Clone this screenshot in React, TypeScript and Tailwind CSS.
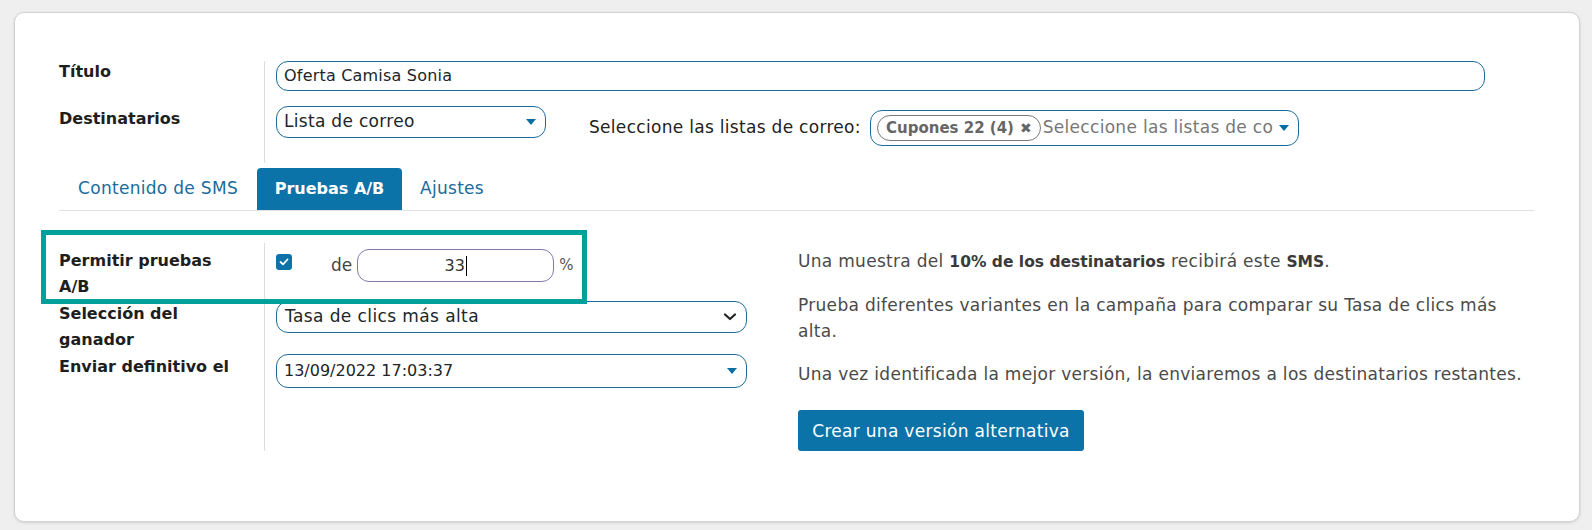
import React from "react";

const Caret = () => (
  <svg width="10" height="6" viewBox="0 0 10 6" className="shrink-0">
    <path d="M0 0 L10 0 L5 6 Z" fill="#0b6ea3" />
  </svg>
);

const Chevron = () => (
  <svg width="14" height="10" viewBox="0 0 14 10" className="shrink-0">
    <path d="M2 2.5 L7 7 L12 2.5" fill="none" stroke="#222" strokeWidth="2.2" strokeLinecap="round" strokeLinejoin="round" />
  </svg>
);

export default function App() {
  return (
    <div
      className="w-[1592px] h-[530px] bg-[#efefef] pt-[12px] pl-[14px] overflow-hidden text-[#212529]"
      style={{ fontFamily: '"DejaVu Sans", "Noto Sans", sans-serif' }}
    >
      <div className="w-[1566px] h-[510px] bg-white rounded-[10px] border border-[#d2d2d2] shadow-[0_1px_3px_rgba(0,0,0,0.12)] pl-[44px] pt-[48px] relative">
        {/* Top section */}
        <div className="flex">
          <div className="w-[205px] text-[16px] font-bold leading-[26px] text-[#1e1e1e]">
            <div className="mt-[-2px]">Título</div>
            <div className="mt-[21px]">Destinatarios</div>
          </div>
          <div className="border-l border-[#dcdcdc] pl-[11px] h-[102px]">
            <div className="w-[1209px] h-[30px] border border-[#1a6c9c] rounded-[12px] flex items-center px-[7px] text-[16px] tracking-[0.2px]">
              Oferta Camisa Sonia
            </div>
            <div className="flex items-start mt-[15px]">
              <div className="w-[270px] h-[32px] border border-[#1a6c9c] rounded-[12px] flex items-center justify-between pl-[7px] pr-[9px] text-[17px] tracking-[0.3px]">
                <span>Lista de correo</span>
                <Caret />
              </div>
              <div className="ml-[43px] w-[281px] mt-[8px] text-[17px] tracking-[0.3px] leading-[26px] text-[#222] whitespace-nowrap">
                Seleccione las listas de correo:
              </div>
              <div className="mt-[4px] w-[429px] h-[36px] border border-[#1a6c9c] rounded-[12px] flex items-center pl-[6px] pr-[9px] overflow-hidden">
                <div className="shrink-0 h-[26px] border border-[#7a7a7a] rounded-full flex items-center px-[8px] gap-[6px] text-[#666] font-bold text-[15px]">
                  <span>Cupones 22 (4)</span>
                  <span className="text-[14px] leading-none">✖</span>
                </div>
                <div className="flex-1 whitespace-nowrap overflow-hidden text-[#777] ml-[2px] mr-[6px] text-[17px] tracking-[0.3px]">
                  Seleccione las listas de correo
                </div>
                <Caret />
              </div>
            </div>
          </div>
        </div>

        {/* Tabs */}
        <div className="mt-[5px] w-[1475px] border-b border-[#dee2e6] flex items-end h-[43px]">
          <div className="w-[198px] h-[42px] flex items-center justify-center text-[17px] tracking-[0.3px] text-[#1a6c9c] whitespace-nowrap">Contenido de SMS</div>
          <div className="w-[145px] h-[42px] flex items-center justify-center text-[16px] font-bold text-white bg-[#0b73a8] rounded-t-[4px] whitespace-nowrap">Pruebas A/B</div>
          <div className="w-[100px] h-[42px] flex items-center justify-center text-[17px] tracking-[0.3px] text-[#1a6c9c]">Ajustes</div>
        </div>

        {/* Lower section */}
        <div className="flex mt-[32px] relative">
          <div className="flex w-[739px] shrink-0">
            <div className="w-[205px] pt-[5px] text-[16px] font-bold leading-[26px] text-[#1e1e1e]">
              <div className="h-[53px]">
                Permitir pruebas
                <br />
                A/B
              </div>
              <div className="h-[53px]">
                Selección del
                <br />
                ganador
              </div>
              <div className="whitespace-nowrap">Enviar definitivo el</div>
            </div>
            <div className="border-l border-[#dcdcdc] pl-[11px] pt-[6px] pb-[12px] flex-1">
              <div className="h-[52px] flex items-start">
                <div className="mt-[5px] w-[16px] h-[16px] rounded-[3px] bg-[#0b73a8] flex items-center justify-center">
                  <svg width="10" height="8" viewBox="0 0 10 8">
                    <path d="M1.5 4 L4 6.3 L8.5 1.5" fill="none" stroke="white" strokeWidth="1.8" strokeLinecap="round" strokeLinejoin="round" />
                  </svg>
                </div>
                <div className="ml-[39px] mt-[3px] text-[17px] leading-[26px] text-[#444]">de</div>
                <div className="ml-[5px] w-[197px] h-[33px] border border-[#7f7aaa] rounded-[12px] flex items-center justify-center text-[16px] text-[#333]">
                  <span>33</span>
                  <span className="inline-block w-[1px] h-[20px] bg-black ml-[1px]" />
                </div>
                <div className="ml-[5px] mt-[3px] text-[15px] leading-[26px] text-[#555]">%</div>
              </div>
              <div className="h-[53px]">
                <div className="w-[471px] h-[32px] border border-[#1a6c9c] rounded-[12px] flex items-center justify-between pl-[8px] pr-[9px] text-[17px] tracking-[0.4px]">
                  <span>Tasa de clics más alta</span>
                  <Chevron />
                </div>
              </div>
              <div className="w-[471px] h-[34px] border border-[#1a6c9c] rounded-[12px] flex items-center justify-between pl-[7px] pr-[9px] text-[16px]">
                <span>13/09/2022 17:03:37</span>
                <Caret />
              </div>
            </div>
          </div>

          <div className="pt-[5px] text-[17px] tracking-[0.3px] leading-[26px] text-[#4a4a4a] whitespace-nowrap">
            <p>
              Una muestra del{" "}
              <b className="text-[#3a3a3a] text-[15.5px] tracking-normal">10% de los destinatarios</b> recibirá este{" "}
              <b className="text-[#3a3a3a] text-[15.5px] tracking-normal">SMS</b>.
            </p>
            <p className="mt-[17px]">
              Prueba diferentes variantes en la campaña para comparar su Tasa de clics más
              <br />
              alta.
            </p>
            <p className="mt-[17px]">
              Una vez identificada la mejor versión, la enviaremos a los destinatarios restantes.
            </p>
            <button className="mt-[23px] w-[286px] h-[41px] bg-[#0b73a8] text-white text-[17px] tracking-[0.3px] rounded-[3px]">
              Crear una versión alternativa
            </button>
          </div>

          {/* Highlight annotation */}
          <div className="absolute left-[-18px] top-[-13px] w-[546px] h-[74px] border-[5px] border-[#00a19b] pointer-events-none" />
        </div>
      </div>
    </div>
  );
}
